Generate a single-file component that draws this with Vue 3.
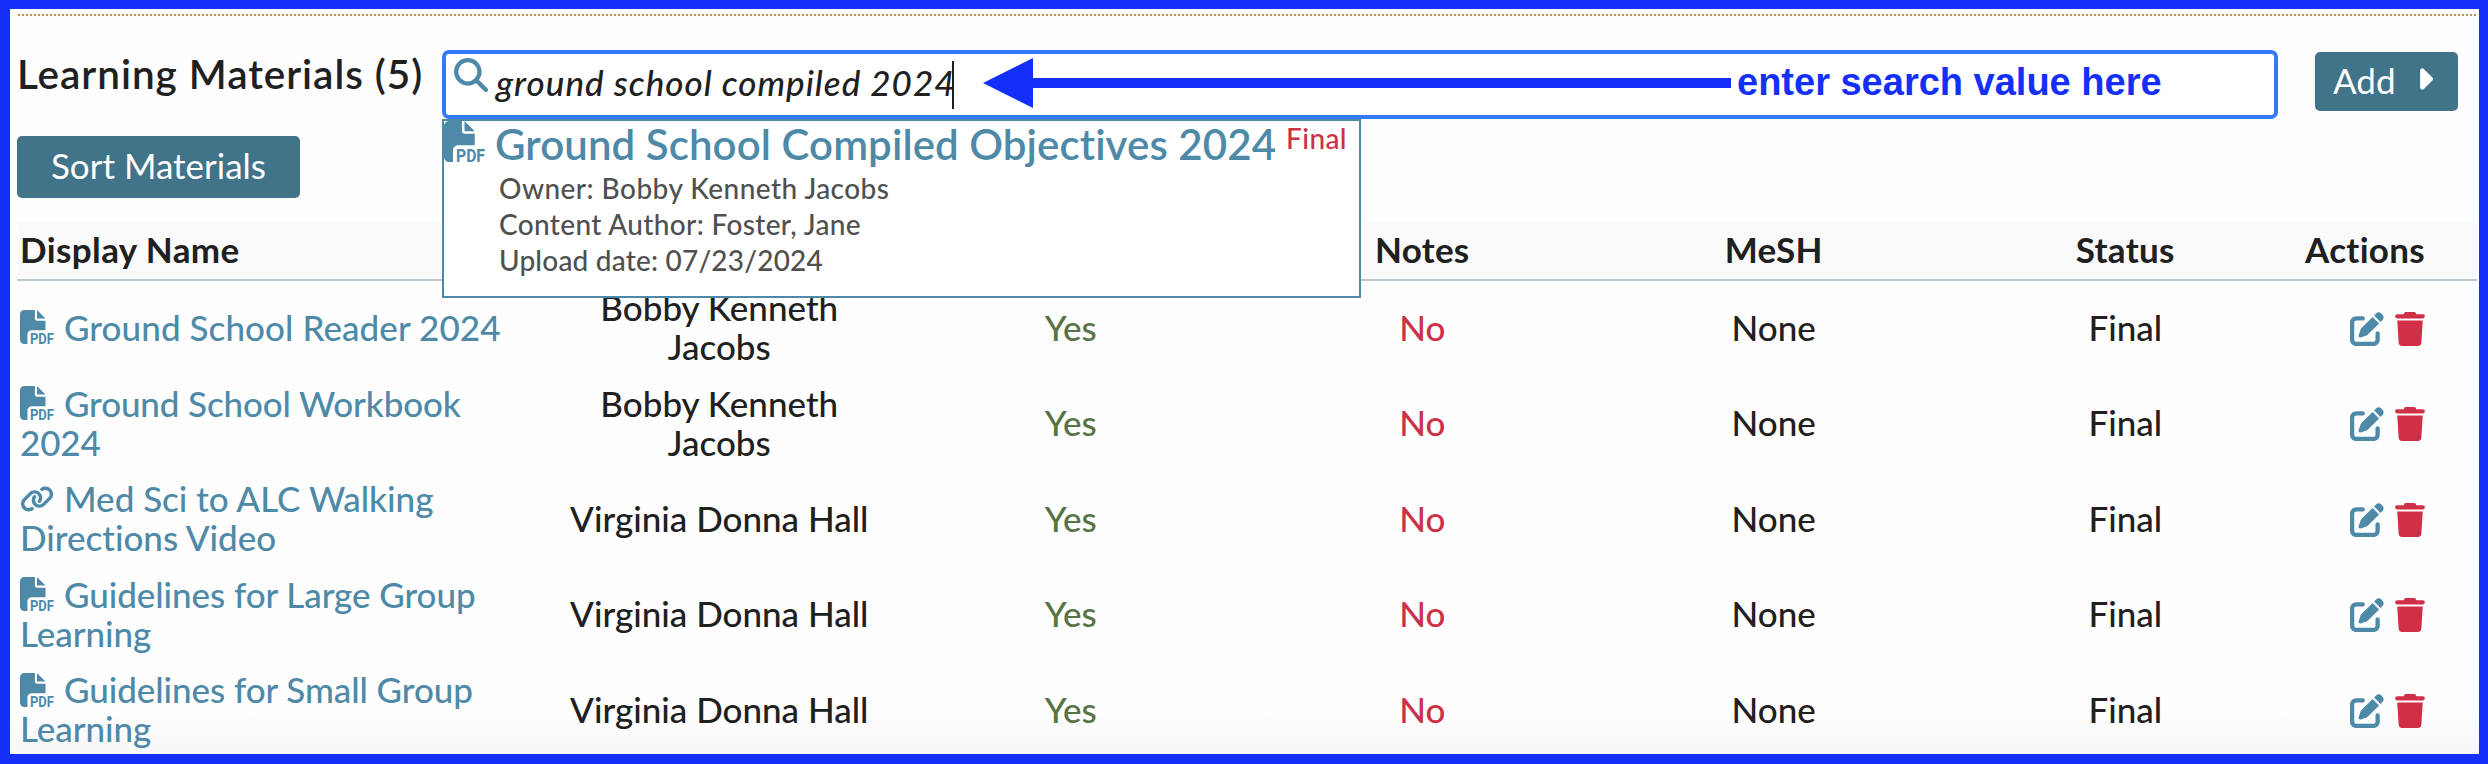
<script setup>
const query = 'ground school compiled 2024'

const columns = ['Display Name', 'Owner', 'Required', 'Notes', 'MeSH', 'Status', 'Actions']

const materials = [
  { icon: 'pdf', lines: ['Ground School Reader 2024'], fit: 'n1', owner: ['Bobby Kenneth', 'Jacobs'] },
  { icon: 'pdf', lines: ['Ground School Workbook', '2024'], fit: 'n2', owner: ['Bobby Kenneth', 'Jacobs'] },
  { icon: 'link', lines: ['Med Sci to ALC Walking', 'Directions Video'], fit: 'n3', owner: ['Virginia Donna Hall'] },
  { icon: 'pdf', lines: ['Guidelines for Large Group', 'Learning'], fit: 'n4', owner: ['Virginia Donna Hall'] },
  { icon: 'pdf', lines: ['Guidelines for Small Group', 'Learning'], fit: 'n5', owner: ['Virginia Donna Hall'] }
]
</script>

<template>
  <main class="frame">
    <svg width="0" height="0" class="defs" aria-hidden="true">
      <symbol id="i-pdf" viewBox="0 0 512 512">
        <path d="M0 64C0 28.700 28.700 0 64 0H224V128c0 17.700 14.300 32 32 32H384V304H176c-35.300 0-64 28.700-64 64V512H64c-35.300 0-64-28.700-64-64V64zM384 128H256V0L384 128z" />
        <text x="150" y="510" textLength="362" lengthAdjust="spacingAndGlyphs" class="pdf-label">PDF</text>
      </symbol>
      <symbol id="i-link" viewBox="0 0 640 512">
        <path d="M579.8 267.7c56.5-56.5 56.5-148 0-204.5c-50-50-128.8-56.5-186.3-15.4l-1.6 1.1c-14.4 10.3-17.7 30.3-7.4 44.6s30.3 17.7 44.6 7.4l1.6-1.1c32.1-22.9 76-19.3 103.8 8.6c31.5 31.5 31.5 82.5 0 114L422.3 334.8c-31.5 31.5-82.5 31.5-114 0c-27.9-27.9-31.5-71.8-8.6-103.8l1.1-1.6c10.3-14.4 6.9-34.4-7.4-44.6s-34.4-6.9-44.6 7.4l-1.1 1.6C206.5 251.2 213 330 263 380c56.5 56.5 148 56.5 204.5 0L579.8 267.7zM60.2 244.3c-56.5 56.5-56.5 148 0 204.5c50 50 128.8 56.5 186.3 15.4l1.6-1.1c14.4-10.3 17.7-30.3 7.4-44.6s-30.3-17.7-44.6-7.4l-1.6 1.1c-32.1 22.9-76 19.3-103.8-8.6C74 372 74 321 105.5 289.5L217.7 177.2c31.5-31.5 82.5-31.5 114 0c27.9 27.9 31.5 71.8 8.6 103.9l-1.1 1.6c-10.3 14.4-6.9 34.4 7.4 44.6s34.4 6.9 44.6-7.4l1.1-1.6C433.5 260.8 427 182 377 132c-56.5-56.5-148-56.5-204.5 0L60.2 244.3z" />
      </symbol>
      <symbol id="i-edit" viewBox="0 0 512 512">
        <path d="M471.6 21.7c-21.9-21.9-57.3-21.9-79.2 0L362.3 51.7l97.9 97.9 30.1-30.1c21.9-21.9 21.9-57.3 0-79.2L471.6 21.7zm-299.2 220c-6.1 6.1-10.8 13.6-13.5 21.9l-29.6 88.8c-2.9 8.6-.6 18.1 5.8 24.6s15.9 8.7 24.6 5.8l88.8-29.6c8.2-2.7 15.7-7.4 21.9-13.5L437.7 172.3 339.7 74.3 172.4 241.7zM96 64C43 64 0 107 0 160V416c0 53 43 96 96 96H352c53 0 96-43 96-96V320c0-17.7-14.3-32-32-32s-32 14.3-32 32v96c0 17.7-14.3 32-32 32H96c-17.7 0-32-14.3-32-32V160c0-17.7 14.3-32 32-32h96c17.7 0 32-14.3 32-32s-14.3-32-32-32H96z" />
      </symbol>
      <symbol id="i-trash" viewBox="0 0 448 512">
        <path d="M135.2 17.7L128 32H32C14.3 32 0 46.3 0 64S14.3 96 32 96H416c17.7 0 32-14.3 32-32s-14.3-32-32-32H320l-7.2-14.3C307.4 6.8 296.3 0 284.2 0H163.8c-12.1 0-23.2 6.8-28.6 17.7zM416 128H32L53.2 467c1.6 25.3 22.6 45 47.9 45H346.9c25.3 0 46.3-19.7 47.9-45L416 128z" />
      </symbol>
      <symbol id="i-search" viewBox="0 0 512 512">
        <path d="M416 208c0 45.9-14.9 88.3-40 122.7L502.6 457.4c12.5 12.5 12.5 32.8 0 45.3s-32.8 12.5-45.3 0L330.7 376c-34.4 25.2-76.8 40-122.7 40C93.1 416 0 322.9 0 208S93.1 0 208 0S416 93.1 416 208zM208 352a144 144 0 1 0 0-288 144 144 0 1 0 0 288z" />
      </symbol>
    </svg>

    <header class="toolbar">
      <h2 class="title">Learning Materials (5)</h2>
      <div class="search">
        <div class="field">
          <svg class="glass"><use href="#i-search" /></svg>
          <span class="query">{{ query }}</span>
          <i class="caret"></i>
          <svg class="arrow" viewBox="0 0 748 50"><path d="M0 25L50 0V20H748V30H50V50z" /></svg>
          <span class="hint">enter search value here</span>
        </div>
        <div class="results">
          <svg class="result-icon"><use href="#i-pdf" /></svg>
          <div class="result">
            <div class="result-head">
              <span class="result-title">Ground School Compiled Objectives 2024</span>
              <span class="result-status">Final</span>
            </div>
            <ul class="meta">
              <li class="m1">Owner: Bobby Kenneth Jacobs</li>
              <li class="m2">Content Author: Foster, Jane</li>
              <li class="m3">Upload date: 07/23/2024</li>
            </ul>
          </div>
        </div>
      </div>
      <button class="btn add">
        <span>Add</span>
        <svg class="play" viewBox="32 96 224 320"><path d="M246.6 278.6c12.5-12.5 12.5-32.8 0-45.3l-128-128c-9.2-9.2-22.9-11.9-34.9-6.9s-19.8 16.6-19.8 29.6l0 256c0 12.9 7.8 24.6 19.8 29.6s25.7 2.2 34.9-6.9l128-128z" /></svg>
      </button>
    </header>

    <button class="btn sort">Sort Materials</button>

    <section class="table">
      <div class="row head">
        <!-- the open results panel lies over the Owner and Required headings -->
        <div v-for="(c, i) in columns" :key="c" class="cell">{{ i === 1 || i === 2 ? '' : c }}</div>
      </div>
      <div v-for="m in materials" :key="m.fit" class="row">
        <div class="cell name" :class="m.fit">
          <div class="line">
            <svg class="kind"><use :href="'#i-' + m.icon" /></svg><span>{{ m.lines[0] }}</span>
          </div>
          <div v-if="m.lines[1]" class="line second">{{ m.lines[1] }}</div>
        </div>
        <div class="cell owner"><div v-for="o in m.owner" :key="o" class="line">{{ o }}</div></div>
        <div class="cell yes">Yes</div>
        <div class="cell no">No</div>
        <div class="cell">None</div>
        <div class="cell">Final</div>
        <div class="cell actions">
          <svg class="edit"><use href="#i-edit" /></svg>
          <svg class="trash"><use href="#i-trash" /></svg>
        </div>
      </div>
    </section>
  </main>
</template>

<style>
body { margin: 0; background: #fff; }
</style>

<style scoped>
.frame {
  box-sizing: border-box;
  width: 2488px;
  height: 764px;
  overflow: hidden;
  border: solid #1430f8;
  border-width: 9px 9px 10px 10px;
  padding: 5px 2px 0 7px;
  background: linear-gradient(#fefefe 0, #fefefe 700px, #f7f7f7 745px);
  font: 500 35px/39.2px Lato, "Open Sans", sans-serif;
  font-variant-ligatures: none;
  color: #202020;
}
.defs { position: absolute; }
.pdf-label { font: 700 226px Roboto, sans-serif; }
svg { display: block; flex: none; }
.toolbar {
  display: grid;
  grid-template-columns: 425px 1836px 180px;
  height: 122px;
  align-items: start;
  background: repeating-linear-gradient(90deg, #c98a4b 0 2px, transparent 2px 4px) 1px 0 / 2458px 2px no-repeat;
}
.title {
  height: 48px;
  margin: 36px 0 0;
  font-size: 40.5px;
  line-height: 48px;
  font-weight: 600;
  letter-spacing: .95px;
  white-space: nowrap;
}
.search { position: relative; margin-top: 36px; z-index: 2; }
.field {
  box-sizing: border-box;
  height: 69px;
  border: 4px solid #347af6;
  border-radius: 7px;
  background: #fff;
  padding-left: 8px;
  display: flex;
  align-items: center;
}
.glass { width: 34px; height: 34px; fill: #4e8aa8; align-self: flex-start; margin-top: 4px; }
.query {
  width: 456px;
  margin-left: 8px;
  padding-bottom: 3px;
  font-style: italic;
  letter-spacing: 1px;
  white-space: nowrap;
}
.caret { width: 2px; height: 48px; background: #202020; }
.arrow { width: 748px; height: 50px; fill: #1430f8; margin: 0 0 3px 29px; }
.hint {
  margin-left: 6px;
  padding-bottom: 6px;
  font: 700 38px/40px "Liberation Sans", Arial, sans-serif;
  color: #1430f8;
  white-space: nowrap;
}
.results {
  position: absolute;
  left: 0;
  top: 69px;
  box-sizing: border-box;
  width: 919px;
  height: 179px;
  border: 2px solid #4e8aa8;
  background: #fff;
  display: flex;
}
.result-icon { width: 41px; height: 41px; fill: #4e8aa8; }
.result { margin-left: 10px; }
.result-head { display: flex; align-items: flex-start; height: 48px; padding-top: 1px; white-space: nowrap; }
.result-title { width: 791px; font-size: 42px; line-height: 44px; font-weight: 600; color: #4e8aa8; letter-spacing: .08px; }
.result-status { font-size: 28px; line-height: 33px; color: #cf3048; letter-spacing: .4px; }
.meta { list-style: none; margin: 0; padding: 0 0 0 4px; font-size: 28px; line-height: 36px; color: #505050; white-space: nowrap; }
.m1 { letter-spacing: .45px; }
.m2 { letter-spacing: .35px; }
.m3 { letter-spacing: .2px; }
.btn {
  box-sizing: border-box;
  border: 0;
  border-radius: 5px;
  background: #417389;
  color: #fff;
  font: 400 35px/40px Lato, "Open Sans", sans-serif;
  display: flex;
  align-items: center;
  white-space: nowrap;
}
.add { width: 143px; height: 59px; margin: 38px 0 0 37px; padding: 0 0 3px 18px; }
.play { width: 15px; height: 22px; fill: #fff; margin: 0 0 3px 22px; }
.sort { width: 283px; height: 62px; padding: 0 0 5px; justify-content: center; }
.table { margin-top: 24px; width: 2460px; }
.row {
  display: grid;
  grid-template-columns: 526px repeat(5, 351.5px) 1fr;
  height: 95.5px;
  align-items: center;
}
.cell { padding: 0 0 3px 1px; text-align: center; white-space: nowrap; }
.head { height: 59px; box-sizing: border-box; background: #fafafa; border-bottom: 2px solid #bfc8cc; font-weight: 700; letter-spacing: .3px; }
.head .cell { padding-bottom: 2px; }
.head .cell:first-child { text-align: left; padding-left: 3px; letter-spacing: .4px; }
.head .cell:last-child { text-align: right; padding-right: 52px; }
.row .name { text-align: left; padding-left: 3px; color: #4e8aa8; }
.name .line:first-child { display: flex; align-items: center; }
.kind { width: 34px; height: 34px; fill: #4e8aa8; margin: 0 10px 0 0; }
.n1 { letter-spacing: .08px; }
.n2 { letter-spacing: -.13px; }
.n4 { letter-spacing: -.06px; }
.n5 { letter-spacing: -.06px; }
.line { height: 39.2px; }
.yes { color: #587346; }
.no { color: #cf3048; }
.row .actions { display: flex; justify-content: flex-end; gap: 11px; padding: 0 52px 0 0; }
.edit { width: 34px; height: 34px; fill: #4e8aa8; }
.trash { width: 30px; height: 34px; fill: #cf3048; }
</style>
